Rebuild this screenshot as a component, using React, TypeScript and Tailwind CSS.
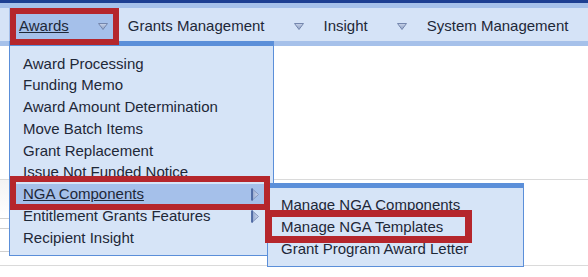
import React from "react";

const DownArrow = () => (
  <svg width="10" height="7" viewBox="0 0 10 7" className="block">
    <defs>
      <linearGradient id="dg" x1="0" y1="0" x2="0" y2="1">
        <stop offset="0" stopColor="#c9d4ea" />
        <stop offset="1" stopColor="#8a9cc0" />
      </linearGradient>
    </defs>
    <polygon points="0.5,0.5 9.5,0.5 5,6.5" fill="url(#dg)" stroke="#7486ad" strokeWidth="1" />
  </svg>
);

const RightArrow = () => (
  <svg width="8" height="13" viewBox="0 0 8 13" className="block">
    <defs>
      <linearGradient id="rg" x1="0" y1="0" x2="1" y2="0">
        <stop offset="0" stopColor="#8fa3cc" />
        <stop offset="1" stopColor="#d3dcef" />
      </linearGradient>
    </defs>
    <polygon points="1,0.5 7.5,6.5 1,12.5" fill="url(#rg)" stroke="#8597c0" strokeWidth="1" />
    <line x1="1" y1="0.5" x2="1" y2="12.5" stroke="#3d5a99" strokeWidth="1.5" />
  </svg>
);

const navItems = [
  { label: "Awards", active: true },
  { label: "Grants Management" },
  { label: "Insight" },
  { label: "System Management", noArrow: true },
];

const awardItems = [
  "Award Processing",
  "Funding Memo",
  "Award Amount Determination",
  "Move Batch Items",
  "Grant Replacement",
  "Issue Not Funded Notice",
  "NGA Components",
  "Entitlement Grants Features",
  "Recipient Insight",
];

const subItems = ["Manage NGA Components", "Manage NGA Templates", "Grant Program Award Letter"];

export default function App() {
  return (
    <div
      className="relative w-[588px] h-[277px] overflow-hidden bg-white text-[15px] text-[#1e2838] flex flex-col"
      style={{ fontFamily: '"Liberation Sans", Arial, sans-serif' }}
    >
      {/* top bar */}
      <div className="h-[3px] bg-[#1d3f92]" />
      <div className="h-[5px] bg-[#a6c1ea]" />
      <div className="h-[33px] bg-[#d5e3f7] flex items-stretch pl-[9px]">
        {navItems.map((n) => (
          <div
            key={n.label}
            className={`flex items-center pt-[3px] pl-[10px] pr-[10px] ${n.active ? "bg-[#a5c0ea]" : ""}`}
          >
            <span className={n.active ? "underline" : ""}>{n.label}</span>
            {!n.noArrow && (
              <span className="ml-[29px] mt-[1px]">
                <DownArrow />
              </span>
            )}
          </div>
        ))}
      </div>
      <div className="h-[5px] bg-[#a6c1ea]" />

      {/* page content behind the menus */}
      <div className="h-[133px]" />
      <div className="border-t border-[#dadada]">
        <div className="w-[120px] flex flex-col">
          <div className="h-[38px] bg-gradient-to-b from-[#f3f3f3] to-white" />
          <div className="h-[10px] border-t border-[#d0d0d0]" />
          <div className="h-[23px] border-t border-[#d0d0d0]" />
          <div className="h-[14px] border-t border-[#d0d0d0]" />
        </div>
      </div>
      <div className="border-t border-[#dadada]" />

      {/* Awards dropdown */}
      <div className="absolute left-[9px] top-[41px] w-[265px] bg-[#d6e4f7] border border-[#5b8fd9] border-t-[5px] pt-[7px] pb-[6px]">
        {awardItems.map((it) => {
          const active = it === "NGA Components";
          const sub = active || it === "Entitlement Grants Features";
          return (
            <div
              key={it}
              className={`h-[21.75px] flex items-center justify-between pl-[13px] pr-[14px] ${active ? "bg-[#a5c0ea]" : ""}`}
            >
              <span className={active ? "underline" : ""}>{it}</span>
              {sub && <RightArrow />}
            </div>
          );
        })}
      </div>

      {/* Sub menu */}
      <div className="absolute left-[267px] top-[183px] w-[257px] bg-[#d6e4f7] border border-[#5b8fd9] border-t-[5px] pt-[6px] pb-[6px]">
        {subItems.map((it) => (
          <div key={it} className="h-[22px] flex items-center pl-[13px]">
            {it}
          </div>
        ))}
      </div>

      {/* annotation boxes */}
      <div className="absolute left-[10px] top-[8px] w-[109px] h-[37px] border-[6px] border-[#b5262c]" />
      <div className="absolute left-[10px] top-[176px] w-[260px] h-[34px] border-[6px] border-[#b5262c]" />
      <div className="absolute left-[265px] top-[210px] w-[207px] h-[33px] border-[7px] border-[#b5262c]" />
    </div>
  );
}
